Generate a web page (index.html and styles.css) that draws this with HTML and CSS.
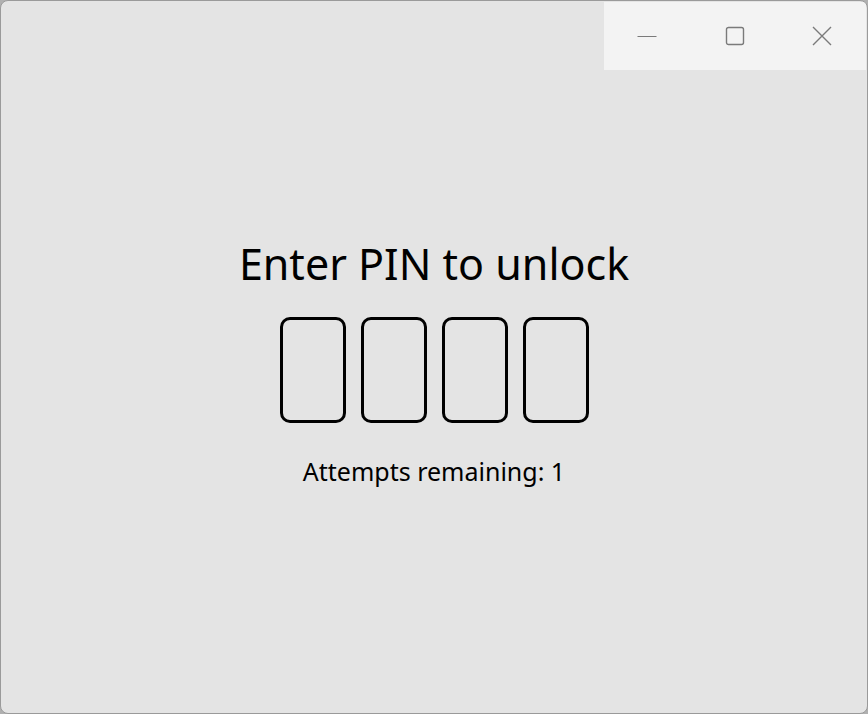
FILE: index.html
```html
<!DOCTYPE html>
<html lang="en">
<head>
<meta charset="utf-8">
<title>Enter PIN</title>
<link rel="stylesheet" href="styles.css">
</head>
<body>
<div class="window">
  <div class="titlebar">
    <div class="caption">
      <button class="cap-btn" aria-label="Minimize">
        <svg width="20" height="20" viewBox="0 0 20 20"><path d="M0.5 10.5H19.5" stroke="#7a7a7a" stroke-width="1.2" fill="none"/></svg>
      </button>
      <button class="cap-btn" aria-label="Maximize">
        <svg width="20" height="20" viewBox="0 0 20 20"><rect x="1.5" y="1.5" width="17" height="17" rx="2" stroke="#7a7a7a" stroke-width="1.4" fill="none"/></svg>
      </button>
      <button class="cap-btn" aria-label="Close">
        <svg width="20" height="20" viewBox="0 0 20 20"><path d="M1 1L19 19M19 1L1 19" stroke="#7a7a7a" stroke-width="1.4" fill="none"/></svg>
      </button>
    </div>
  </div>
  <main class="content">
    <h1 class="title">Enter PIN to unlock</h1>
    <div class="pins">
      <div class="pin"></div>
      <div class="pin"></div>
      <div class="pin"></div>
      <div class="pin"></div>
    </div>
    <p class="attempts">Attempts remaining: 1</p>
  </main>
</div>
</body>
</html>
```
FILE: styles.css
```css
html, body {
  margin: 0;
  padding: 0;
  width: 868px;
  height: 714px;
  background: #b0b0b0;
  overflow: hidden;
}
.window {
  box-sizing: border-box;
  width: 868px;
  height: 714px;
  border: 1px solid #9a9a9a;
  border-radius: 8px;
  background: #e4e4e4;
  overflow: hidden;
  display: flex;
  flex-direction: column;
  font-family: "Noto Sans", "Open Sans", sans-serif;
  color: #000;
}
.titlebar {
  display: flex;
  justify-content: flex-end;
  padding-top: 1px;
  padding-right: 1px;
}
.caption {
  display: flex;
  background: #f3f3f3;
  height: 68px;
}
.cap-btn {
  width: 87.5px;
  height: 68px;
  border: 0;
  padding: 0;
  background: transparent;
  display: flex;
  align-items: center;
  justify-content: center;
}
.content {
  display: flex;
  flex-direction: column;
  align-items: center;
  padding-top: 164px;
}
.title {
  margin: 0;
  font-weight: 400;
  font-size: 43px;
  line-height: 60px;
}
.pins {
  display: flex;
  gap: 15px;
  margin-top: 23px;
}
.pin {
  box-sizing: border-box;
  width: 66px;
  height: 106px;
  border: 3px solid #000;
  border-radius: 10px;
}
.attempts {
  margin: 32px 0 0;
  font-size: 25px;
  line-height: 32px;
}
```
